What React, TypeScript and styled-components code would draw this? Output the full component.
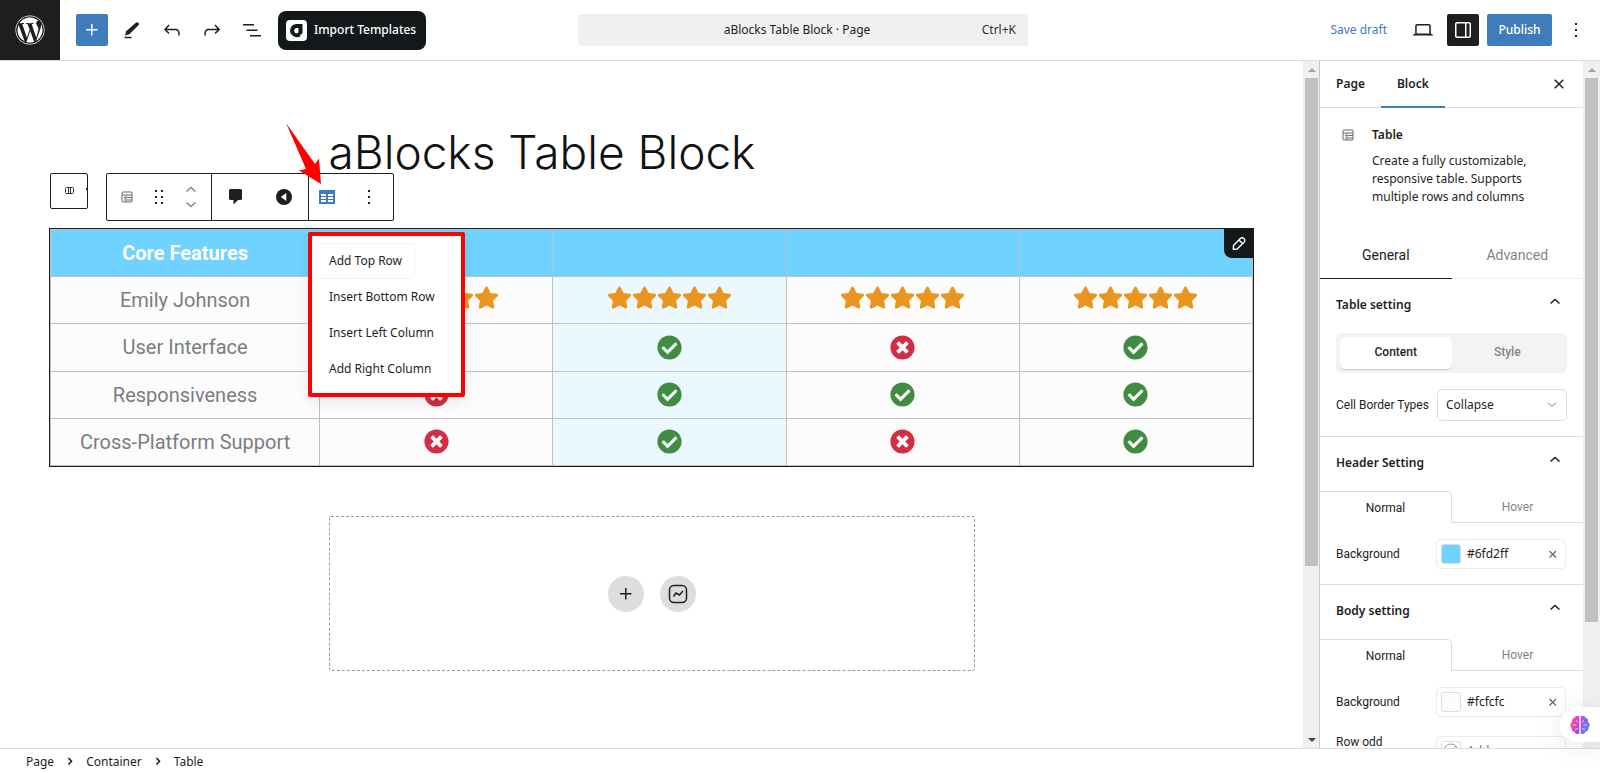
import React from "react";
import styled, { createGlobalStyle } from "styled-components";
import { FaCheckCircle, FaStar, FaTimesCircle, FaWordpress } from "react-icons/fa";

const UI = `"Noto Sans", "Open Sans", sans-serif`;
const ROBOTO = `Roboto, "Liberation Sans", sans-serif`;
const INK = "#1e1e1e";
const BLUE = "#3f7cbc";
const LINE = "#dddddd";

const Global = createGlobalStyle`
  * { box-sizing: border-box; }
  body { margin: 0; background: #fff; color: ${INK}; font: 12px/18px ${UI}; }
  button, select, input { font: inherit; color: inherit; margin: 0; }
  button { background: none; border: 0; padding: 0; }
  svg { display: block; flex: none; }
`;

const Shell = styled.div`
  display: flex;
  flex-direction: column;
  height: 100vh;
  overflow: hidden;
  position: relative;
`;

/* ---------- top bar ---------- */
const TopBar = styled.header`
  display: flex;
  align-items: center;
  height: 61px;
  flex: none;
  border-bottom: 1px solid ${LINE};
  padding-right: 8px;
`;
const BarSide = styled.div<{ $end?: boolean }>`
  display: flex;
  align-items: center;
  gap: 8px;
  flex: 1 1 0;
  justify-content: ${(p) => (p.$end ? "flex-end" : "flex-start")};
`;
const HomeLink = styled.a`
  display: flex;
  align-items: center;
  justify-content: center;
  width: 60px;
  height: 60px;
  background: ${INK};
  color: #fff;
  margin-right: 8px;
`;
const IconButton = styled.button<{ $tone?: "blue" | "dark" }>`
  display: flex;
  align-items: center;
  justify-content: center;
  width: 32px;
  height: 32px;
  border-radius: 2px;
  background: ${(p) => (p.$tone === "blue" ? BLUE : p.$tone === "dark" ? INK : "none")};
  color: ${(p) => (p.$tone ? "#fff" : INK)};
`;
const ImportButton = styled.button`
  display: flex;
  align-items: center;
  gap: 7px;
  height: 39px;
  padding: 0 10px 0 8px;
  margin-left: 2px;
  border-radius: 8px;
  background: #13191b;
  color: #fff;
  font-weight: 500;
  white-space: nowrap;
`;
const CommandBar = styled.button`
  display: grid;
  grid-template-columns: 1fr auto 1fr;
  align-items: center;
  width: 450px;
  height: 32px;
  margin-left: 14px;
  padding: 0 12px 0 0;
  border-radius: 4px;
  background: #f0f0f0;
  span:nth-child(2) { grid-column: 3; justify-self: end; color: #2f2f2f; }
  span:nth-child(1) { grid-column: 2; }
`;
const DraftButton = styled.button`
  color: ${BLUE};
  padding: 0 12px;
`;
const PublishButton = styled.button`
  height: 32px;
  width: 65px;
  border-radius: 2px;
  background: ${BLUE};
  color: #fff;
  font-weight: 500;
`;

/* ---------- body ---------- */
const Workspace = styled.div`
  display: flex;
  flex: 1;
  min-height: 0;
`;
const Canvas = styled.main`
  flex: 1;
  min-width: 0;
  padding: 63px 49px 0;
  overflow: hidden;
`;
const Title = styled.h1`
  max-width: 646px;
  margin: 0 auto 48px;
  font: 300 46px/56px Inter, "Liberation Sans", sans-serif;
  color: #111;
  white-space: nowrap;
`;
const TableBlock = styled.section`
  position: relative;
  border: 1px solid ${INK};
`;
const DataTable = styled.table`
  width: 100%;
  height: 237px;
  table-layout: fixed;
  border-collapse: collapse;
  font: 20px/24px ${ROBOTO};
  color: #7a7d82;
  th, td {
    height: 47px;
    padding: 0;
    border: 1px solid #c0c0c0;
    text-align: center;
    font-weight: 400;
    background: #fcfcfc;
  }
  th:first-child { width: 22.4%; }
  td:nth-child(3) { background: #ebf8ff; }
  thead th { background: #6fd2ff; color: #fff; font-weight: 700; }
`;
const Mark = styled.span<{ $ok: boolean }>`
  display: flex;
  justify-content: center;
  color: ${(p) => (p.$ok ? "#418c41" : "#d22d46")};
`;
const Stars = styled.span`
  display: flex;
  justify-content: center;
  padding-bottom: 6px;
  color: #e99520;
`;
const EditBadge = styled.button`
  position: absolute;
  top: 0;
  right: 0;
  display: flex;
  align-items: center;
  justify-content: center;
  width: 29px;
  height: 29px;
  border-radius: 0 0 0 8px;
  background: #13191b;
  color: #fff;
`;

const FloatingTools = styled.div`
  position: absolute;
  left: 0;
  bottom: calc(100% + 8px);
  display: flex;
  align-items: flex-start;
  gap: 18px;
`;
const ParentButton = styled.button`
  position: relative;
  display: flex;
  align-items: center;
  justify-content: center;
  width: 38px;
  height: 36px;
  border: 1px solid ${INK};
  border-radius: 2px;
  background: #fff;
  &::after {
    content: "";
    position: absolute;
    right: 0;
    top: 14px;
    width: 1px;
    height: 2px;
    background: ${INK};
  }
`;
const ToolGroup = styled.div`
  display: flex;
  height: 48px;
  border: 1px solid ${INK};
  border-radius: 2px;
  background: #fff;
`;
const ToolSection = styled.div`
  display: flex;
  align-items: center;
  & + & { border-left: 1px solid ${INK}; }
`;
const Tool = styled.button<{ $w: number }>`
  display: flex;
  flex-direction: column;
  align-items: center;
  justify-content: center;
  gap: 4px;
  width: ${(p) => p.$w}px;
  height: 46px;
`;
const Pointer = styled.svg`
  position: absolute;
  left: 235px;
  top: -50px;
`;
const Menu = styled.div`
  position: absolute;
  left: 258px;
  top: 3px;
  width: 157px;
  height: 165px;
  padding: 7px 4px 0;
  border: 4px solid #ff0000;
  border-radius: 2px;
  background: #fff;
  box-shadow: 0 6px 14px rgba(0, 0, 0, 0.08);
  display: flex;
  flex-direction: column;
  align-items: flex-start;
`;
const MenuItem = styled.button<{ $focus?: boolean }>`
  height: 36px;
  padding: 0 12px;
  border: 1px solid ${(p) => (p.$focus ? "#eff5f9" : "transparent")};
  border-radius: 4px;
  white-space: nowrap;
`;

const Appender = styled.section`
  display: flex;
  align-items: center;
  justify-content: center;
  gap: 16px;
  max-width: 646px;
  height: 155px;
  margin: 49px auto 0;
  border: 1px dashed #999;
  border-radius: 2px;
`;
const RoundButton = styled.button`
  display: flex;
  align-items: center;
  justify-content: center;
  width: 36px;
  height: 36px;
  border-radius: 50%;
  background: #dddddf;
`;

/* ---------- scroll bars ---------- */
const Track = styled.div<{ $slim?: boolean }>`
  display: flex;
  flex-direction: column;
  flex: none;
  width: ${(p) => (p.$slim ? 16 : 17)}px;
  padding: 0 ${(p) => (p.$slim ? 1 : 2)}px 0 2px;
  background: #f0f0f0;
`;
const Arrow = styled.div<{ $down?: boolean }>`
  display: flex;
  justify-content: center;
  align-items: center;
  height: 17px;
  flex: none;
  &::after {
    content: "";
    border: 4px solid transparent;
    border-top: ${(p) => (p.$down ? "4px solid #444" : "0")};
    border-bottom: ${(p) => (p.$down ? "0" : "4px solid #a3a3a3")};
  }
`;
const Thumb = styled.div<{ $part: number }>`
  flex: ${(p) => p.$part} 0 0;
  background: #c0c0c0;
`;
const Rest = styled.div<{ $part: number }>`
  flex: ${(p) => p.$part} 0 0;
`;
const ScrollBar = ({ part, slim }: { part: number; slim?: boolean }) => (
  <Track $slim={slim} aria-hidden="true">
    <Arrow />
    <Thumb $part={part} />
    <Rest $part={1000 - part} />
    <Arrow $down />
  </Track>
);

/* ---------- sidebar ---------- */
const Sidebar = styled.aside`
  width: 264px;
  flex: none;
  overflow: hidden;
  border-left: 1px solid #c8c8c8;
`;
const PanelTabs = styled.div`
  display: flex;
  align-items: stretch;
  height: 47px;
  border-bottom: 1px solid ${LINE};
`;
const PanelTab = styled.button<{ $on?: boolean }>`
  position: relative;
  padding: 0 16px;
  font-weight: 600;
  &::after {
    content: "";
    display: ${(p) => (p.$on ? "block" : "none")};
    position: absolute;
    left: 0;
    right: 0;
    bottom: -1px;
    height: 2px;
    background: ${BLUE};
  }
`;
const CloseButton = styled(IconButton)`
  margin: 7px 8px 0 auto;
`;
const BlockCard = styled.div`
  display: flex;
  gap: 12px;
  padding: 18px 16px 28px;
  height: 123px;
  & > svg { margin: -3px 0 0; }
  h2 { margin: 0 0 8px; font-size: 12px; line-height: 18px; font-weight: 600; }
  p { margin: 0; }
`;
const ModeTabs = styled.div`
  display: flex;
`;
const ModeTab = styled.button<{ $on?: boolean }>`
  flex: 1;
  height: 48px;
  font: 14px/20px ${ROBOTO};
  color: ${(p) => (p.$on ? INK : "#828488")};
  border-bottom: 1px solid ${(p) => (p.$on ? INK : "#eeeeee")};
`;
const Section = styled.section`
  border-bottom: 1px solid ${LINE};
  padding-bottom: 15px;
`;
const SectionHead = styled.button`
  display: flex;
  width: 100%;
  justify-content: space-between;
  padding: 16px 23px 18px 16px;
  line-height: 20px;
  font-weight: 600;
`;
const Segment = styled.div`
  display: flex;
  margin: 0 16px 16px;
  padding: 4px;
  border-radius: 6px;
  background: #f3f3f3;
`;
const SegmentButton = styled.button<{ $on?: boolean }>`
  flex: 1;
  height: 32px;
  border-radius: 5px;
  font: 500 12px/16px ${ROBOTO};
  padding-bottom: 3px;
  color: ${(p) => (p.$on ? INK : "#828488")};
  background: ${(p) => (p.$on ? "#fff" : "none")};
  box-shadow: ${(p) => (p.$on ? "0 1px 1px rgba(0,0,0,.16)" : "none")};
`;
const Field = styled.div`
  display: flex;
  align-items: center;
  justify-content: space-between;
  padding: 0 16px;
  & + & { margin-top: 16px; }
  label { width: 100px; font: 12px/18px ${ROBOTO}; white-space: pre-line; }
`;
const SelectWrap = styled.div`
  position: relative;
  width: 130px;
  svg { position: absolute; right: 10px; top: 12px; pointer-events: none; }
`;
const Select = styled.select`
  appearance: none;
  width: 100%;
  height: 32px;
  padding: 0 8px;
  border: 1px solid ${LINE};
  border-radius: 5px;
  background: #fff;
`;
const StateTabs = styled.div`
  display: flex;
  margin-bottom: 16px;
`;
const StateTab = styled.button<{ $on?: boolean }>`
  flex: 1;
  height: 32px;
  font: 12px/16px ${ROBOTO};
  color: ${(p) => (p.$on ? INK : "#828488")};
  border: solid ${LINE};
  border-width: ${(p) => (p.$on ? "1px 1px 0 0" : "0 0 1px 0")};
  border-radius: ${(p) => (p.$on ? "0 5px 0 0" : "0")};
`;
const Picker = styled.div`
  display: flex;
  align-items: center;
  gap: 6px;
  width: 130px;
  height: 30px;
  margin-right: 1px;
  padding: 0 10px 0 4px;
  border: 1px solid #ebebeb;
  border-radius: 5px;
  input { width: 76px; border: 0; padding: 0; outline: 0; background: none; }
`;
const Swatch = styled.span<{ $color: string }>`
  display: flex;
  flex: none;
  width: 20px;
  height: 20px;
  border: 1px solid #dcdcdc;
  border-radius: 3px;
  background: ${(p) => p.$color};
`;

/* ---------- footer ---------- */
const Footer = styled.footer`
  display: flex;
  align-items: center;
  gap: 12px;
  flex: none;
  height: 25px;
  padding: 2px 26px 0;
  border-top: 1px solid ${LINE};
  a { color: inherit; text-decoration: none; }
`;
const Assistant = styled.button`
  position: absolute;
  right: 0;
  bottom: 31px;
  display: flex;
  align-items: center;
  width: 40px;
  height: 35px;
  padding-left: 10px;
  border-radius: 18px 0 0 18px;
  background: #fff;
  box-shadow: 0 4px 28px rgba(0, 0, 0, 0.1);
`;

/* ---------- icons ---------- */
const Glyph = ({ d, size = 24 }: { d: string; size?: number }) => (
  <svg width={size} height={size} viewBox="0 0 24 24" fill="currentColor" aria-hidden="true">
    <path d={d} />
  </svg>
);
const G = {
  plus: "M11 12.5V17.5H12.5V12.5H17.5V11H12.5V6H11V11H6V12.5H11Z",
  undo: "M18.3 11.7c-.6-.6-1.4-.9-2.3-.9H6.7l2.9-3.3-1.1-1-4.5 5L8.5 16l1-1-2.7-2.7H16c.5 0 .9.2 1.3.5 1 1 1 3.4 1 4.5v.3h1.5v-.2c0-1.5 0-4.3-1.5-5.7z",
  redo: "M15.6 6.5l-1.1 1 2.9 3.3H8c-.9 0-1.7.3-2.3.9-1.4 1.5-1.4 4.2-1.4 5.6v.2h1.5v-.3c0-1.1 0-3.5 1-4.5.3-.3.7-.5 1.3-.5h9.2L14.5 15l1.1 1.1 4.6-4.6-4.6-5z",
  list: "M3 6h11v1.5H3V6Zm3.5 5.5h11V13h-11v-1.5ZM21 17H10v1.5h11V17Z",
  laptop: "M20.5 16h-.7V8c0-1.1-.9-2-2-2H6.2c-1.1 0-2 .9-2 2v8h-.7c-.8 0-1.5.7-1.5 1.5h20c0-.8-.7-1.5-1.5-1.5zM5.7 8c0-.3.2-.5.5-.5h11.6c.3 0 .5.2.5.5v7.6H5.7V8z",
  drawer: "M18 4H6c-1.1 0-2 .9-2 2v12c0 1.1.9 2 2 2h12c1.1 0 2-.9 2-2V6c0-1.1-.9-2-2-2zm-4 14.5H6c-.3 0-.5-.2-.5-.5V6c0-.3.2-.5.5-.5h8v13zm4.5-.5c0 .3-.2.5-.5.5h-2.5v-13H18c.3 0 .5.2.5.5v12z",
  more: "M13 19h-2v-2h2v2zm0-6h-2v-2h2v2zm0-6h-2V5h2v2z",
  drag: "M8 7h2V5H8v2zm0 6h2v-2H8v2zm0 6h2v-2H8v2zm6-14v2h2V5h-2zm0 8h2v-2h-2v2zm0 6h2v-2h-2v2z",
  close: "M12 13.06l3.712 3.713 1.061-1.06L13.061 12l3.712-3.712-1.06-1.06L12 10.938 8.288 7.227l-1.061 1.06L10.939 12l-3.712 3.712 1.06 1.061L12 13.061z",
};

const Brush = () => (
  <svg width="24" height="24" viewBox="0 0 24 24" aria-hidden="true">
    <path d="M15.800 4.700c.8-.7 1.900-.7 2.600 0 .7.8.6 1.800 0 2.500L9.400 16.200 5 17.400 6.200 13.300z" fill="currentColor" />
    <path d="M4.500 19.500h7" stroke="currentColor" strokeWidth="1.500" />
  </svg>
);
const ABlocksLogo = () => (
  <svg width="21" height="21" viewBox="0 0 21 21" aria-hidden="true">
    <rect width="21" height="21" rx="4" fill="#fff" />
    <path d="M10.500 4H16.500V12.200C16.500 13.800 15.500 14.600 14.200 14.600V16.500C13.200 17 12 17.200 10.800 17.200A6.600 6.600 0 0 1 10.500 4z" fill="#13191b" />
    <path d="M10.800 8H12.500v3.600c0 .9-.7 1.600-1.600 1.600a2.600 2.600 0 0 1-.1-5.200z" fill="#fff" />
  </svg>
);
const SmallTable = () => (
  <svg width="24" height="24" viewBox="0 0 24 24" fill="none" stroke="#666" aria-hidden="true">
    <rect x="7" y="7" width="10" height="10" rx="1" />
    <path d="M7 10h10M9 12.500h1.500M12 12.500h5M9 15h1.500M12 15h5M11 10.500v6.500" />
  </svg>
);
const Columns = () => (
  <svg width="12" height="10" viewBox="0 0 12 10" fill="none" stroke="#333" aria-hidden="true">
    <rect x="2.500" y="1.500" width="8" height="6" rx="1" />
    <path d="M5.500 1.500v6M7.500 1.500v6" />
  </svg>
);
const Caret = ({ up, color = INK }: { up?: boolean; color?: string }) => (
  <svg width="10" height="12" viewBox="0 0 10 12" fill="none" stroke={color} strokeWidth="1.500" aria-hidden="true">
    <path d={up ? "M.5 8.500 5 4.500 9.500 8.500" : "M.5 3.500 5 7.500 9.500 3.500"} />
  </svg>
);
const Comment = () => (
  <svg width="16" height="18" viewBox="0 0 16 18" aria-hidden="true">
    <path d="M2.500 1h10A1.500 1.500 0 0 1 14 2.500V10.500A1.500 1.500 0 0 1 12.500 12H10L5.500 16.500V12H2.500A1.500 1.500 0 0 1 1 10.500V2.500A1.500 1.500 0 0 1 2.500 1z" fill={INK} />
  </svg>
);
const PlayBack = () => (
  <svg width="16" height="16" viewBox="0 0 16 16" aria-hidden="true">
    <circle cx="8" cy="8" r="8" fill={INK} />
    <path d="M10.300 4v8L4.800 8z" fill="#fff" />
  </svg>
);
const BlueTable = () => (
  <svg width="16" height="14" viewBox="0 0 16 14" aria-hidden="true">
    <path d="M0 0h16v14H0z" fill={BLUE} />
    <path d="M2 4h5v2H2zM9 4h5v2H9zM2 7h5v2H2zM9 7h5v2H9zM2 10h5v2H2zM9 10h5v2H9z" fill="#fff" />
  </svg>
);
const Pen = () => (
  <svg width="14" height="14" viewBox="0 0 14 14" fill="none" stroke="currentColor" strokeWidth="1.400" strokeLinejoin="round" aria-hidden="true">
    <path d="M1.300 12.300 1.500 8.400 8.300 1.600A2.500 2.500 0 0 1 12 5.300L5.200 12.100zM7 3.100 10.500 6.600" />
  </svg>
);
const Spark = () => (
  <svg width="20" height="20" viewBox="0 0 20 20" fill="none" stroke={INK} strokeWidth="1.500" aria-hidden="true">
    <rect x="1.500" y="1.500" width="17" height="17" rx="4.500" />
    <path d="M5.500 12.500 8 9l3.500 2 3.500-4" />
  </svg>
);
const Crumb = () => (
  <svg width="8" height="10" viewBox="0 0 8 10" fill="none" stroke={INK} strokeWidth="1.600" aria-hidden="true">
    <path d="M2.500 1 5.500 4.300 2.500 7.500" />
  </svg>
);
const NoColor = () => (
  <svg width="18" height="18" viewBox="0 0 18 18" fill="none" stroke="#999" aria-hidden="true">
    <circle cx="9" cy="9" r="7" />
    <path d="M4 14 14 4" />
  </svg>
);
const Brain = () => (
  <svg width="20" height="20" viewBox="0 0 20 20" aria-hidden="true">
    <defs>
      <linearGradient id="brainL" x1="0" y1="0" x2="1" y2="1">
        <stop offset="0" stopColor="#ff8a3c" />
        <stop offset="0.400" stopColor="#f03fc0" />
        <stop offset="1" stopColor="#8a4bf5" />
      </linearGradient>
      <linearGradient id="brainR" x1="0" y1="0" x2="1" y2="1">
        <stop offset="0" stopColor="#c04be8" />
        <stop offset="1" stopColor="#3f8cff" />
      </linearGradient>
    </defs>
    <path d="M9.300 1.500C7.500 0 5 .8 4.600 2.800 2.600 3 1.600 5 2.200 6.600-.2 8 0 11.600 1.600 12.800 1.400 15.200 3 16.600 4.600 16.800 5.400 19.400 8 19.600 9.300 18.200z" fill="url(#brainL)" />
    <path d="M10.700 1.500C12.500 0 15 .8 15.400 2.800 17.400 3 18.400 5 17.800 6.600 20.200 8 20 11.600 18.400 12.800 18.600 15.200 17 16.600 15.400 16.800 14.600 19.400 12 19.600 10.700 18.200z" fill="url(#brainR)" />
    <path d="M3 10h3.500M6 5.500 8 7M5 14.500l3-1M17 10h-3.500M14 5.500 12 7M15 14.500l-3-1" stroke="#fff" strokeOpacity=".7" fill="none" />
  </svg>
);

/* ---------- data ---------- */
const ROWS: { label: string; marks: boolean[] | null }[] = [
  { label: "Emily Johnson", marks: null },
  { label: "User Interface", marks: [true, true, false, true] },
  { label: "Responsiveness", marks: [false, true, true, true] },
  { label: "Cross-Platform Support", marks: [false, true, false, true] },
];
const ACTIONS = ["Add Top Row", "Insert Bottom Row", "Insert Left Column", "Add Right Column"];

const Rating = () => (
  <Stars role="img" aria-label="5 stars">
    {[0, 1, 2, 3, 4].map((i) => (
      <FaStar key={i} size={25} />
    ))}
  </Stars>
);

const Head = ({ text }: { text: string }) => (
  <SectionHead aria-expanded="true">
    {text}
    <Caret up />
  </SectionHead>
);
const States = () => (
  <StateTabs>
    <StateTab $on>Normal</StateTab>
    <StateTab>Hover</StateTab>
  </StateTabs>
);
const ColorField = ({ id, label, value, empty }: { id: string; label: string; value: string; empty?: boolean }) => (
  <Field>
    <label htmlFor={id}>{label}</label>
    <Picker>
      <Swatch $color={empty ? "#fff" : value}>{empty && <NoColor />}</Swatch>
      <input id={id} defaultValue={empty ? "" : value} placeholder={empty ? value : ""} />
      {!empty && (
        <button aria-label="Clear">
          <svg width="8" height="8" viewBox="0 0 8 8" stroke="#666" strokeWidth="1.200" aria-hidden="true">
            <path d="M.5 1l6.500 6.500M7 1l-6.500 6.500" />
          </svg>
        </button>
      )}
    </Picker>
  </Field>
);

export default function App() {
  return (
    <Shell>
      <Global />
      <TopBar>
        <BarSide>
          <HomeLink href="#" aria-label="Home"><FaWordpress size={30} /></HomeLink>
          <IconButton $tone="blue" aria-label="Add block"><Glyph d={G.plus} /></IconButton>
          <IconButton aria-label="Tools"><Brush /></IconButton>
          <IconButton aria-label="Undo"><Glyph d={G.undo} /></IconButton>
          <IconButton aria-label="Redo"><Glyph d={G.redo} /></IconButton>
          <IconButton aria-label="Document overview"><Glyph d={G.list} /></IconButton>
          <ImportButton><ABlocksLogo />Import Templates</ImportButton>
        </BarSide>
        <CommandBar>
          <span>aBlocks Table Block · Page</span>
          <span>Ctrl+K</span>
        </CommandBar>
        <BarSide $end>
          <DraftButton>Save draft</DraftButton>
          <IconButton aria-label="View"><Glyph d={G.laptop} /></IconButton>
          <IconButton $tone="dark" aria-label="Settings"><Glyph d={G.drawer} /></IconButton>
          <PublishButton>Publish</PublishButton>
          <IconButton aria-label="Options"><Glyph d={G.more} /></IconButton>
        </BarSide>
      </TopBar>

      <Workspace>
        <Canvas>
          <Title>aBlocks Table Block</Title>
          <TableBlock>
            <DataTable>
              <thead>
                <tr>
                  <th scope="col">Core Features</th>
                  <th /><th /><th /><th />
                </tr>
              </thead>
              <tbody>
                {ROWS.map((row) => (
                  <tr key={row.label}>
                    <th scope="row">{row.label}</th>
                    {[0, 1, 2, 3].map((i) => (
                      <td key={i}>
                        {row.marks ? (
                          <Mark $ok={row.marks[i]}>
                            {row.marks[i] ? <FaCheckCircle size={25} /> : <FaTimesCircle size={25} />}
                          </Mark>
                        ) : (
                          <Rating />
                        )}
                      </td>
                    ))}
                  </tr>
                ))}
              </tbody>
            </DataTable>
            <EditBadge aria-label="Edit"><Pen /></EditBadge>
            <FloatingTools>
              <ParentButton aria-label="Select parent"><Columns /></ParentButton>
              <ToolGroup>
                <ToolSection>
                  <Tool $w={40} aria-label="Table"><SmallTable /></Tool>
                  <Tool $w={24} aria-label="Drag"><Glyph d={G.drag} /></Tool>
                  <Tool $w={40} aria-label="Move">
                    <Caret up color="#888" />
                    <Caret color="#888" />
                  </Tool>
                </ToolSection>
                <ToolSection>
                  <Tool $w={48} aria-label="Comment"><Comment /></Tool>
                  <Tool $w={48} aria-label="Alignment"><PlayBack /></Tool>
                </ToolSection>
                <ToolSection>
                  <Tool $w={36} aria-label="Edit table"><BlueTable /></Tool>
                  <Tool $w={48} aria-label="Options"><Glyph d={G.more} /></Tool>
                </ToolSection>
              </ToolGroup>
              <Pointer width="38" height="62" viewBox="0 0 38 62" aria-hidden="true">
                <path d="M1 0 30 41 34 35.500 36 61 14 47.500 21 46z" fill="#ff0000" />
              </Pointer>
            </FloatingTools>
            <Menu role="menu">
              {ACTIONS.map((a, i) => (
                <MenuItem key={a} role="menuitem" $focus={i === 0}>{a}</MenuItem>
              ))}
            </Menu>
          </TableBlock>
          <Appender>
            <RoundButton aria-label="Add block"><Glyph d={G.plus} /></RoundButton>
            <RoundButton aria-label="Template library"><Spark /></RoundButton>
          </Appender>
        </Canvas>
        <ScrollBar part={747} slim />
        <Sidebar>
          <PanelTabs>
            <PanelTab>Page</PanelTab>
            <PanelTab $on>Block</PanelTab>
            <CloseButton aria-label="Close settings"><Glyph d={G.close} /></CloseButton>
          </PanelTabs>
          <BlockCard>
            <SmallTable />
            <div>
              <h2>Table</h2>
              <p>Create a fully customizable, responsive table. Supports multiple rows and columns</p>
            </div>
          </BlockCard>
          <ModeTabs>
            <ModeTab $on>General</ModeTab>
            <ModeTab>Advanced</ModeTab>
          </ModeTabs>
          <Section>
            <Head text="Table setting" />
            <Segment>
              <SegmentButton $on>Content</SegmentButton>
              <SegmentButton>Style</SegmentButton>
            </Segment>
            <Field>
              <label htmlFor="border-type">Cell Border Types</label>
              <SelectWrap>
                <Select id="border-type" defaultValue="Collapse">
                  <option>Collapse</option>
                  <option>Separate</option>
                </Select>
                <svg width="10" height="8" viewBox="0 0 10 8" fill="none" stroke="#777" aria-hidden="true">
                  <path d="M1 1.500 5 5.500 9 1.500" />
                </svg>
              </SelectWrap>
            </Field>
          </Section>
          <Section>
            <Head text="Header Setting" />
            <States />
            <ColorField id="header-bg" label="Background" value="#6fd2ff" />
          </Section>
          <Section>
            <Head text="Body setting" />
            <States />
            <ColorField id="body-bg" label="Background" value="#fcfcfc" />
            <ColorField id="odd-bg" label={"Row odd\nbackground"} value="Add" empty />
          </Section>
        </Sidebar>
        <ScrollBar part={833} />
      </Workspace>

      <Footer>
        <a href="#">Page</a>
        <Crumb />
        <a href="#">Container</a>
        <Crumb />
        <a href="#">Table</a>
      </Footer>
      <Assistant aria-label="Assistant"><Brain /></Assistant>
    </Shell>
  );
}
